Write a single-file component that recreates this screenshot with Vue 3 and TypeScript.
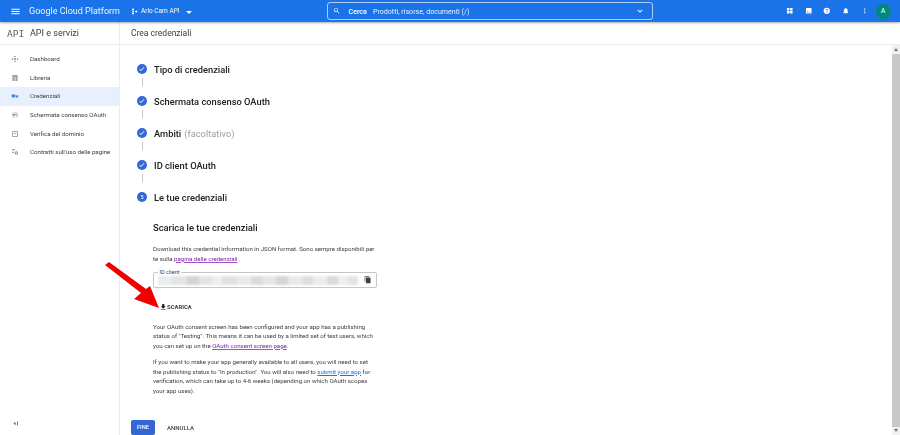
<script setup lang="ts">
// Google Cloud "Crea credenziali" page, download step.
const navItems = [
  { label: 'Dashboard', icon: 'dash' },
  { label: 'Libreria', icon: 'lib' },
  { label: 'Credenziali', icon: 'key', active: true },
  { label: 'Schermata consenso OAuth', icon: 'consent' },
  { label: 'Verifica del dominio', icon: 'domain' },
  { label: "Contratti sull'uso delle pagine", icon: 'terms' },
]
const steps = [
  { title: 'Tipo di credenziali' },
  { title: 'Schermata consenso OAuth' },
  { title: 'Ambiti', extra: '(facoltativo)' },
  { title: 'ID client OAuth' },
  { title: 'Le tue credenziali', num: '5' },
]
// blurred-out client id blotches: [width, opacity]
const blotches = [
  [14, 0.35], [16, 0.5], [12, 0.8], [14, 0.5], [10, 0.3], [16, 0.55], [14, 0.4], [12, 0.65],
  [14, 0.45], [12, 0.75], [16, 0.4], [10, 0.6], [14, 0.35], [12, 0.65], [10, 0.3], [10, 0.5],
]
</script>

<template>
  <div class="page">
    <header class="topbar">
      <svg class="menu" viewBox="0 0 24 24"><path d="M3 18h18v-2H3zm0-5h18v-2H3zm0-7v2h18V6z" /></svg>
      <span class="brand">Google Cloud Platform</span>
      <button class="project">
        <svg viewBox="0 0 24 24" class="proj-icon"><circle cx="7" cy="5" r="3.500" /><circle cx="7" cy="19" r="3.500" /><circle cx="18" cy="12" r="3.500" /><circle cx="7" cy="12" r="3" /></svg>
        <span>Arlo Cam API</span>
        <i class="caret"></i>
      </button>
      <div class="search">
        <svg viewBox="0 0 24 24" class="s-icon"><path d="M15.500 14h-.8l-.3-.3a6.500 6.500 0 1 0-.7.7l.3.3v.8l5 5 1.500-1.500zm-6 0a4.500 4.500 0 1 1 0-9 4.500 4.500 0 0 1 0 9z" /></svg>
        <b>Cerca</b>
        <span class="s-hint">Prodotti, risorse, documenti (/)</span>
        <svg viewBox="0 0 24 24" class="s-chev"><path d="M7.400 8.600 12 13.200l4.600-4.600L18 10l-6 6-6-6z" /></svg>
      </div>
      <div class="actions">
        <svg viewBox="0 0 24 24"><path d="M3 3h8v8H3zm10 0h8v8h-8zM3 13h8v8H3zm10 0h8v8h-8z" /></svg>
        <svg viewBox="0 0 24 24"><path fill-rule="evenodd" d="M4 3h16a1 1 0 0 1 1 1v16a1 1 0 0 1-1 1H4a1 1 0 0 1-1-1V4a1 1 0 0 1 1-1zm2 9v1.500l3 1.500-3 1.500V18l5-2.500v-1zm6 5v1.500h5V17z" /></svg>
        <svg viewBox="0 0 24 24"><path fill-rule="evenodd" d="M12 2a10 10 0 1 1 0 20 10 10 0 0 1 0-20zm-1 14v2h2v-2zm1-10a4 4 0 0 0-4 4h2a2 2 0 1 1 4 0c0 2-3 1.800-3 5h2c0-2.300 3-2.500 3-5a4 4 0 0 0-4-4z" /></svg>
        <svg viewBox="0 0 24 24"><path d="M12 22a2 2 0 0 0 2-2h-4a2 2 0 0 0 2 2zm6-6v-5c0-3.100-1.600-5.600-4.500-6.300V4a1.500 1.500 0 0 0-3 0v.7C7.600 5.400 6 7.900 6 11v5l-2 2v1h16v-1z" /></svg>
        <svg viewBox="0 0 24 24"><path d="M12 8a2 2 0 1 0 0-4 2 2 0 0 0 0 4zm0 2a2 2 0 1 0 0 4 2 2 0 0 0 0-4zm0 6a2 2 0 1 0 0 4 2 2 0 0 0 0-4z" /></svg>
        <span class="avatar">A</span>
      </div>
    </header>

    <div class="body">
      <aside class="side">
        <div class="side-head"><span class="api">API</span><span>API e servizi</span></div>
        <nav class="nav">
          <a v-for="item in navItems" :key="item.label" class="nav-row" :class="{ active: item.active }">
            <svg viewBox="0 0 24 24" class="nav-icon">
              <path v-if="item.icon === 'dash'" d="M12 2l3 3-1.500 1.500L12 5 10.500 6.500 9 5zM2 12l3-3 1.500 1.500L5 12l1.500 1.500L5 15zm20 0-3 3-1.500-1.500L19 12l-1.500-1.500L19 9zM12 22l-3-3 1.500-1.500L12 19l1.500-1.500L15 19zm0-13a3 3 0 1 1 0 6 3 3 0 0 1 0-6z" />
              <path v-else-if="item.icon === 'lib'" d="M4 4h16v4H4zm0 6h7v4H4zm9 0h7v4h-7zM4 16h7v4H4zm9 0h7v4h-7z" />
              <path v-else-if="item.icon === 'key'" fill-rule="evenodd" d="M7 7a5 5 0 0 1 4.700 3.300H22v3.400h-2V17h-3.400v-3.300h-4.900A5 5 0 1 1 7 7zm0 3.400a1.600 1.600 0 1 0 0 3.200 1.600 1.600 0 0 0 0-3.200z" />
              <path v-else-if="item.icon === 'consent'" d="M4 5h16v2H4zm0 4h16v2H4zm0 4h8v2H4zm0 4h8v2H4zm11 0 1.500-1.500 1 1L20 13l1.500 1.500-4 4z" />
              <path v-else-if="item.icon === 'domain'" fill-rule="evenodd" d="M4 4h16v16H4zm2 2v12h12V6zm2 3h8v2H8z" />
              <path v-else d="M3 4h9v2H3zm0 4h6v2H3zm0 4h6v2H3zM16 10a5 5 0 1 1 0 10 5 5 0 0 1 0-10zm0 2.500a2.500 2.500 0 1 0 0 5 2.500 2.500 0 0 0 0-5z" />
            </svg>
            <span>{{ item.label }}</span>
          </a>
        </nav>
        <svg viewBox="0 0 24 24" class="collapse"><path d="M12 6v12l-7-6zM17 5h3v14h-3z" /></svg>
      </aside>

      <main class="main">
        <div class="main-head">Crea credenziali</div>
        <div class="scroll-wrap">
          <div class="content">
            <ol class="stepper">
              <li v-for="(step, i) in steps" :key="step.title" class="step">
                <div class="step-row">
                  <span class="bullet">
                    <svg v-if="!step.num" viewBox="0 0 24 24"><path d="M9.500 16.200 5.300 12l-1.400 1.400 5.600 5.600L20.500 8l-1.400-1.400z" /></svg>
                    <template v-else>{{ step.num }}</template>
                  </span>
                  <span class="step-title">{{ step.title }}<em v-if="step.extra">{{ step.extra }}</em></span>
                </div>
                <span v-if="i < steps.length - 1" class="connector"></span>
              </li>
            </ol>

            <section class="panel">
              <h2>Scarica le tue credenziali</h2>
              <p class="lead">Download this credential information in JSON format. Sono sempre disponibili per te sulla <a class="visited">pagina delle credenziali</a> .</p>
              <div class="field">
                <span class="field-label">ID client</span>
                <div class="redacted">
                  <i v-for="(b, i) in blotches" :key="i" :style="{ width: b[0] + 'px', opacity: b[1] }"></i>
                </div>
                <svg viewBox="0 0 24 24" class="copy"><path d="M16 1H4a2 2 0 0 0-2 2v14h2V3h12zm3 4H8a2 2 0 0 0-2 2v14a2 2 0 0 0 2 2h11a2 2 0 0 0 2-2V7a2 2 0 0 0-2-2z" /></svg>
              </div>
              <button class="download">
                <svg viewBox="0 0 24 24"><path d="M19 9h-4V3H9v6H5l7 7zM5 18v2h14v-2z" /></svg>
                SCARICA
              </button>
              <p class="note first">Your OAuth consent screen has been configured and your app has a publishing status of "Testing". This means it can be used by a limited set of test users, which you can set up on the <a class="visited">OAuth consent screen page</a>.</p>
              <p class="note">If you want to make your app generally available to all users, you will need to set the publishing status to "In production". You will also need to <a class="link">submit your app</a> for verification, which can take up to 4-6 weeks (depending on which OAuth scopes your app uses).</p>
            </section>

            <div class="footer-btns">
              <button class="primary">FINE</button>
              <button class="ghost">ANNULLA</button>
            </div>
          </div>
          <div class="scrollbar">
            <i class="sb-up"></i>
            <div class="sb-thumb"></div>
            <i class="sb-down"></i>
          </div>
        </div>
      </main>
    </div>

    <svg class="arrow" viewBox="0 0 60 50" width="60" height="50">
      <path d="M0 3 L4 0 L41 27 L45 24 L54 46 L29 37 L36 31 Z" fill="#f00000" />
    </svg>
  </div>
</template>

<style>
html, body { margin: 0; background: #fff; overflow: hidden; }
</style>

<style scoped>
.page { position: relative; width: 900px; height: 435px; overflow: hidden; font-family: Roboto, "Liberation Sans", sans-serif; color: #3c4043; filter: blur(.3px); }
.topbar { height: 22px; background: #1a73e8; color: #fff; display: flex; align-items: center; box-shadow: 0 1px 2px rgba(60, 64, 67, .45); position: relative; z-index: 2; }
.menu { width: 11px; height: 11px; fill: #fff; margin-left: 10px; flex: none; }
.brand { font-size: 9px; margin-left: 8px; opacity: .92; white-space: nowrap; width: 102px; flex: none; }
.project { background: none; border: 0; padding: 0; color: #fff; font: inherit; font-size: 6.500px; display: flex; align-items: center; gap: 3px; width: 62px; flex: none; white-space: nowrap; }
.proj-icon { width: 7px; height: 7px; fill: #fff; flex: none; }
.caret { border: 3px solid transparent; border-top: 3px solid #fff; margin: 3px 0 0 3px; border-bottom: 0; }
.search { margin-left: 134px; width: 326px; height: 18px; flex: none; box-sizing: border-box; border: 1px solid rgba(255, 255, 255, .65); border-radius: 3px; display: flex; align-items: center; font-size: 7.100px; padding: 0 7px 0 5px; }
.s-icon { width: 7.500px; height: 7.500px; fill: #fff; margin-right: 8px; flex: none; }
.search b { font-weight: 500; }
.s-hint { margin-left: 6px; opacity: .9; flex: 1; }
.s-chev { width: 10px; height: 10px; fill: #fff; }
.actions { margin-left: auto; display: flex; align-items: center; gap: 11.200px; padding-right: 9.500px; }
.actions svg { width: 7.500px; height: 7.500px; fill: #fff; }
.avatar { width: 15px; height: 15px; border-radius: 50%; background: #00897b; font-size: 7px; display: flex; align-items: center; justify-content: center; margin-left: -4px; }
.body { display: flex; height: 413px; }
.side { width: 119px; border-right: 1px solid #ebedef; position: relative; flex: none; }
.side-head { height: 22px; border-bottom: 1px solid #ebedef; display: flex; align-items: center; font-size: 9px; color: #3c4043; gap: 7px; padding-left: 7px; }
.api { font-family: "DejaVu Sans Mono", monospace; font-size: 9.500px; color: #5f6368; width: 16px; }
.nav { padding-top: 4.500px; }
.nav-row { height: 18.700px; display: flex; align-items: center; font-size: 6.150px; color: #3c4043; padding-left: 11px; gap: 11px; white-space: nowrap; }
.nav-row.active { background: #e8f0fe; color: #3c4043; }
.nav-icon { width: 8px; height: 8px; fill: #80868b; flex: none; }
.nav-row.active .nav-icon { fill: #1a73e8; }
.collapse { position: absolute; left: 12px; bottom: 8.500px; width: 7px; height: 7px; fill: #5f6368; }
.main { flex: 1; min-width: 0; display: flex; flex-direction: column; }
.main-head { height: 22px; border-bottom: 1px solid #ebedef; display: flex; align-items: center; padding-left: 11px; font-size: 8.500px; color: #3c4043; }
.scroll-wrap { flex: 1; display: flex; min-height: 0; }
.content { flex: 1; padding: 16px 0 0 11px; min-width: 0; }
.stepper { list-style: none; margin: 0; padding: 0; }
.step { height: 32px; position: relative; }
.step-row { display: flex; align-items: center; height: 16px; gap: 7px; }
.bullet { width: 10px; height: 10px; border-radius: 50%; background: #3367d6; color: #fff; font-size: 5.500px; display: flex; align-items: center; justify-content: center; margin-left: 6px; }
.bullet svg { width: 7.500px; height: 7.500px; fill: #fff; }
.step-title { font-size: 9.300px; font-weight: 500; color: #202124; }
.step-title em { font-style: normal; font-weight: 400; color: #9aa0a6; margin-left: 3px; }
.connector { position: absolute; left: 10.500px; top: 17px; width: 1px; height: 8px; background: #c4c7ca; }
.panel { margin: 0 0 0 22px; width: 226px; }
.panel h2 { margin: 0; font-size: 9.400px; font-weight: 500; color: #202124; line-height: 14px; }
.lead { margin: 9px 0 0; font-size: 6.100px; line-height: 9.600px; color: #3c4043; }
.visited { color: #7b1fa2; text-decoration: underline; text-decoration-color: #a64fc4; }
.link { color: #1a73e8; text-decoration: underline; }
.field { position: relative; margin-top: 9px; height: 16px; width: 224px; box-sizing: border-box; border: 1px solid #c4c6c9; border-radius: 2px; display: flex; align-items: center; padding: 0 5px 0 4px; }
.field-label { position: absolute; left: 4px; top: -4px; background: #fff; padding: 0 1.500px; font-size: 5.600px; line-height: 7px; color: #3c4043; }
.redacted { flex: 1; display: flex; min-width: 0; overflow: hidden; height: 9px; margin-right: 6px; filter: blur(1.200px); }
.redacted i { display: block; height: 100%; background: #c6c8ca; flex: auto; }
.copy { width: 7.500px; height: 7.500px; fill: #3c4043; flex: none; }
.download { display: flex; align-items: center; margin: 15px 0 0 5.500px; background: none; border: 0; padding: 0; font: inherit; font-size: 5.900px; font-weight: 700; color: #3c4043; }
.download svg { width: 8.500px; height: 8.500px; fill: #202124; }
.note { margin: 7px 0 0; max-width: 222px; font-size: 6.100px; line-height: 9.500px; color: #3c4043; }
.note.first { margin-top: 10px; }
.footer-btns { display: flex; align-items: center; gap: 12px; margin: 24.500px 0 0; }
.primary { width: 24px; height: 15px; border: 0; border-radius: 2px; background: #3367d6; color: #fff; font: inherit; font-size: 5.800px; font-weight: 500; padding: 0; }
.ghost { background: none; border: 0; padding: 0; font: inherit; font-size: 6px; font-weight: 500; color: #3c4043; }
.scrollbar { width: 8px; background: #f1f1f1; display: flex; flex-direction: column; align-items: center; flex: none; }
.sb-up { border: 2.500px solid transparent; border-bottom: 3px solid #6f6f6f; border-top: 0; margin: 3px 0; }
.sb-thumb { flex: 1; width: 100%; background: #c8c8c8; margin-bottom: 2px; }
.sb-down { border: 2.500px solid transparent; border-top: 3px solid #6f6f6f; border-bottom: 0; margin: 0 0 3px; }
.arrow { position: absolute; left: 105px; top: 262px; }
</style>
